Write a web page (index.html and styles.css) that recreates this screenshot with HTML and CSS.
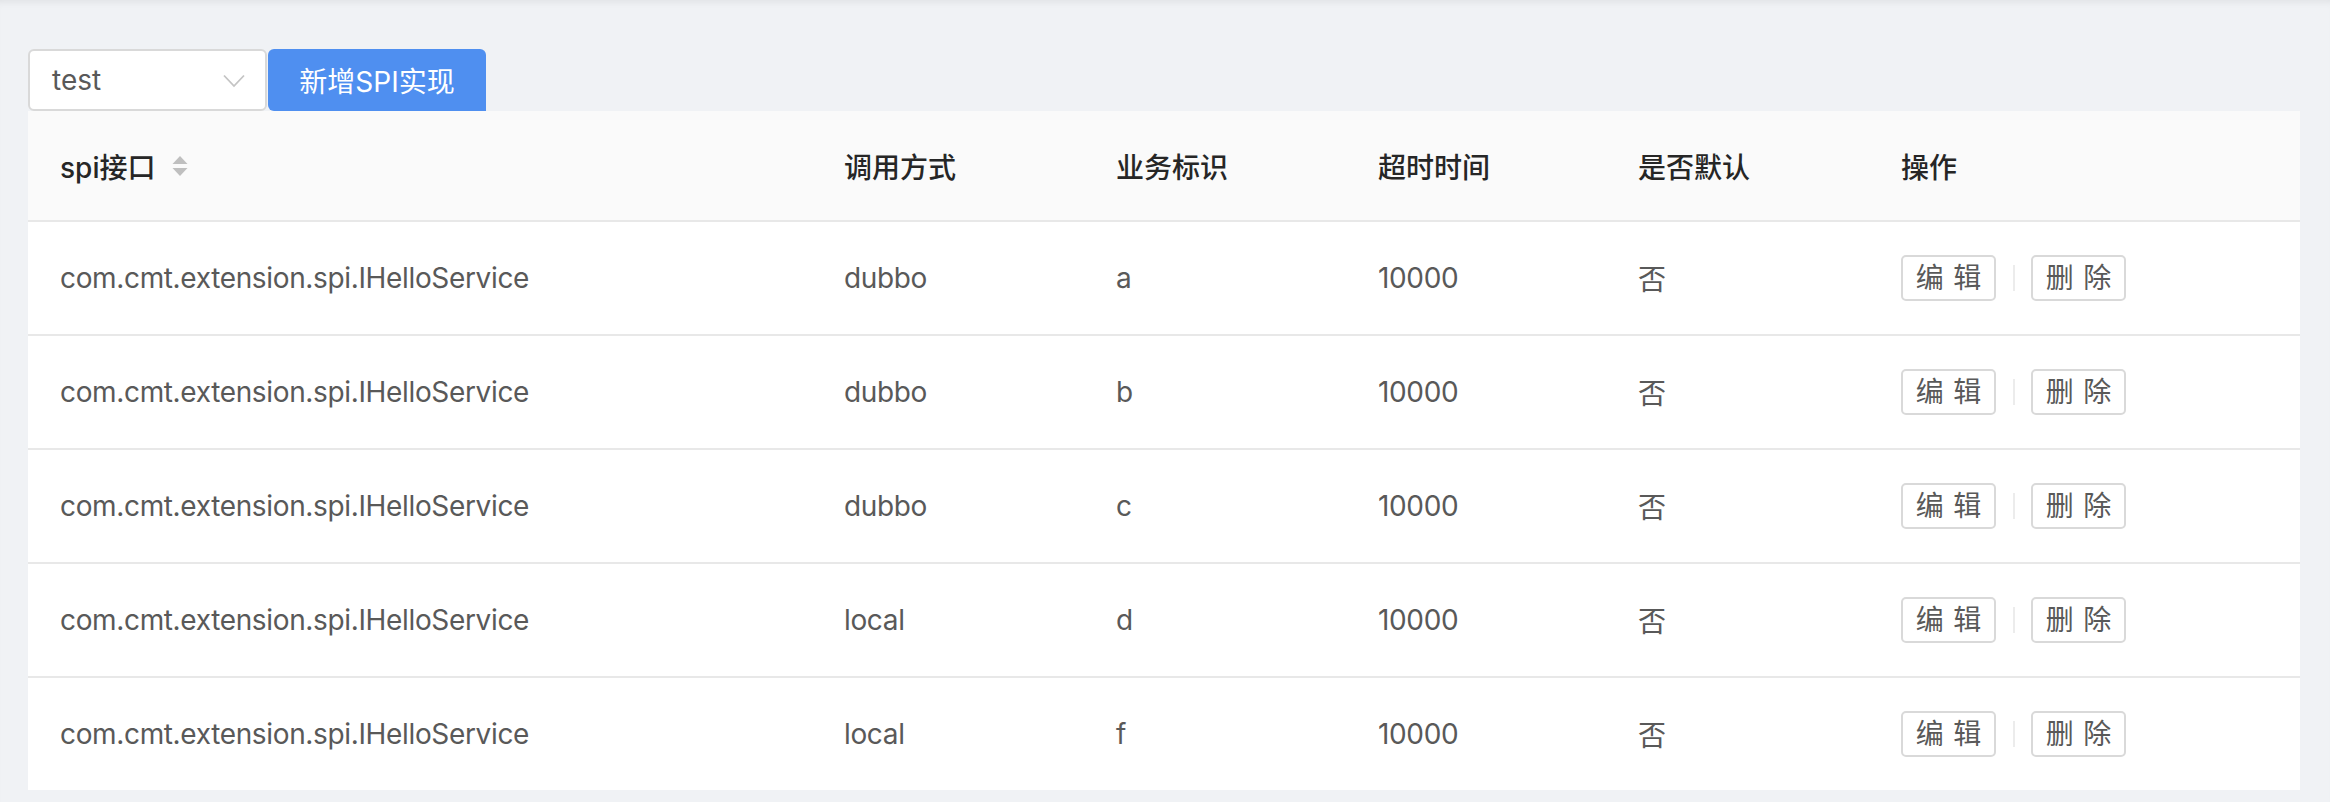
FILE: index.html
```html
<!DOCTYPE html>
<html lang="zh-CN">
<head>
<meta charset="utf-8">
<title>SPI</title>
<link rel="stylesheet" href="styles.css">
</head>
<body>
<div class="page">
  <div class="toolbar">
    <div class="select">
      <span class="select-value">test</span>
      <svg class="select-arrow" width="22" height="14" viewBox="0 0 22 14"><path d="M1 1.5 L11 12 L21 1.5" fill="none" stroke="#c4c4c4" stroke-width="1.8"/></svg>
    </div>
    <button class="btn-primary">新增SPI实现</button>
  </div>
  <table class="table">
    <colgroup>
      <col class="c1"><col class="c2"><col class="c3"><col class="c4"><col class="c5"><col class="c6">
    </colgroup>
    <thead>
      <tr>
        <th><div class="th-inner"><span class="th-title">spi接口</span><span class="sorter"><svg width="18" height="26" viewBox="0 0 18 26"><path d="M9 3 L16.5 11 L1.5 11 Z" fill="#bfbfbf"/><path d="M1.5 15 L16.5 15 L9 23 Z" fill="#bfbfbf"/></svg></span></div></th>
        <th>调用方式</th>
        <th>业务标识</th>
        <th>超时时间</th>
        <th>是否默认</th>
        <th>操作</th>
      </tr>
    </thead>
    <tbody>
      <tr>
        <td>com.cmt.extension.spi.IHelloService</td><td>dubbo</td><td>a</td><td>10000</td><td>否</td>
        <td><div class="actions"><button class="btn"><span>编辑</span></button><i class="divider"></i><button class="btn"><span>删除</span></button></div></td>
      </tr>
      <tr>
        <td>com.cmt.extension.spi.IHelloService</td><td>dubbo</td><td>b</td><td>10000</td><td>否</td>
        <td><div class="actions"><button class="btn"><span>编辑</span></button><i class="divider"></i><button class="btn"><span>删除</span></button></div></td>
      </tr>
      <tr>
        <td>com.cmt.extension.spi.IHelloService</td><td>dubbo</td><td>c</td><td>10000</td><td>否</td>
        <td><div class="actions"><button class="btn"><span>编辑</span></button><i class="divider"></i><button class="btn"><span>删除</span></button></div></td>
      </tr>
      <tr>
        <td>com.cmt.extension.spi.IHelloService</td><td>local</td><td>d</td><td>10000</td><td>否</td>
        <td><div class="actions"><button class="btn"><span>编辑</span></button><i class="divider"></i><button class="btn"><span>删除</span></button></div></td>
      </tr>
      <tr>
        <td>com.cmt.extension.spi.IHelloService</td><td>local</td><td>f</td><td>10000</td><td>否</td>
        <td><div class="actions"><button class="btn"><span>编辑</span></button><i class="divider"></i><button class="btn"><span>删除</span></button></div></td>
      </tr>
    </tbody>
  </table>
</div>
</body>
</html>
```
FILE: styles.css
```css
html, body {
  margin: 0;
  padding: 0;
  background: #f0f2f5;
}
body {
  font-family: Inter, "Noto Sans CJK SC", sans-serif;
  font-size: 28px;
  color: #595959;
}
.page {
  width: 2330px;
  height: 802px;
  box-sizing: border-box;
  padding: 49px 30px 0 28px;
  background: #f0f2f5;
  box-shadow: inset 0 7px 7px -5px rgba(0, 0, 0, 0.07);
}
.toolbar {
  display: flex;
  align-items: stretch;
  height: 62px;
}
.select {
  width: 239px;
  box-sizing: border-box;
  background: #fff;
  border: 2px solid #d9d9d9;
  border-radius: 6px;
  display: flex;
  align-items: center;
  justify-content: space-between;
  padding: 0 20px 0 22px;
}
.select-value {
  color: #595959;
  font-size: 28px;
}
.select-arrow {
  display: block;
  margin-top: 2px;
}
.btn-primary {
  margin-left: 1px;
  width: 218px;
  box-sizing: border-box;
  border: none;
  border-radius: 6px 6px 0 6px;
  background: #4f8ff0;
  color: #fff;
  font-family: Inter, "Noto Sans CJK SC", sans-serif;
  font-size: 28px;
  white-space: nowrap;
  padding: 0;
}
.table {
  width: 2272px;
  table-layout: fixed;
  border-collapse: collapse;
  background: #fff;
}
.c1 { width: 784px; }
.c2 { width: 272px; }
.c3 { width: 262px; }
.c4 { width: 260px; }
.c5 { width: 263px; }
.c6 { width: 431px; }
.table th {
  height: 110px;
  box-sizing: border-box;
  background: #fafafa;
  color: #262626;
  font-weight: 500;
  text-align: left;
  padding: 0 32px;
  border-bottom: 2px solid #e8e8e8;
  font-family: Inter, "Noto Sans CJK SC", sans-serif;
}
.th-inner {
  display: flex;
  align-items: center;
}
.sorter {
  display: block;
  margin-left: 16px;
}
.sorter svg {
  display: block;
}
.table td {
  height: 114px;
  box-sizing: border-box;
  padding: 0 32px;
  border-bottom: 2px solid #e8e8e8;
  color: #595959;
  white-space: nowrap;
  letter-spacing: -0.35px;
}
.table tbody tr:last-child td {
  border-bottom: none;
  height: 113px;
}
.actions {
  display: flex;
  align-items: center;
}
.btn {
  display: flex;
  align-items: center;
  justify-content: center;
  width: 95px;
  height: 46px;
  box-sizing: border-box;
  padding: 0;
  border: 2px solid #d9d9d9;
  border-radius: 5px;
  background: #fff;
  color: #595959;
  font-family: Inter, "Noto Sans CJK SC", sans-serif;
  font-size: 28px;
  line-height: 1;
  letter-spacing: 0.34em;
  white-space: nowrap;
}
.btn span {
  margin-right: -0.34em;
}
.divider {
  display: block;
  width: 2px;
  height: 26px;
  background: #ececec;
  margin: 0 16px 0 17px;
}
```
